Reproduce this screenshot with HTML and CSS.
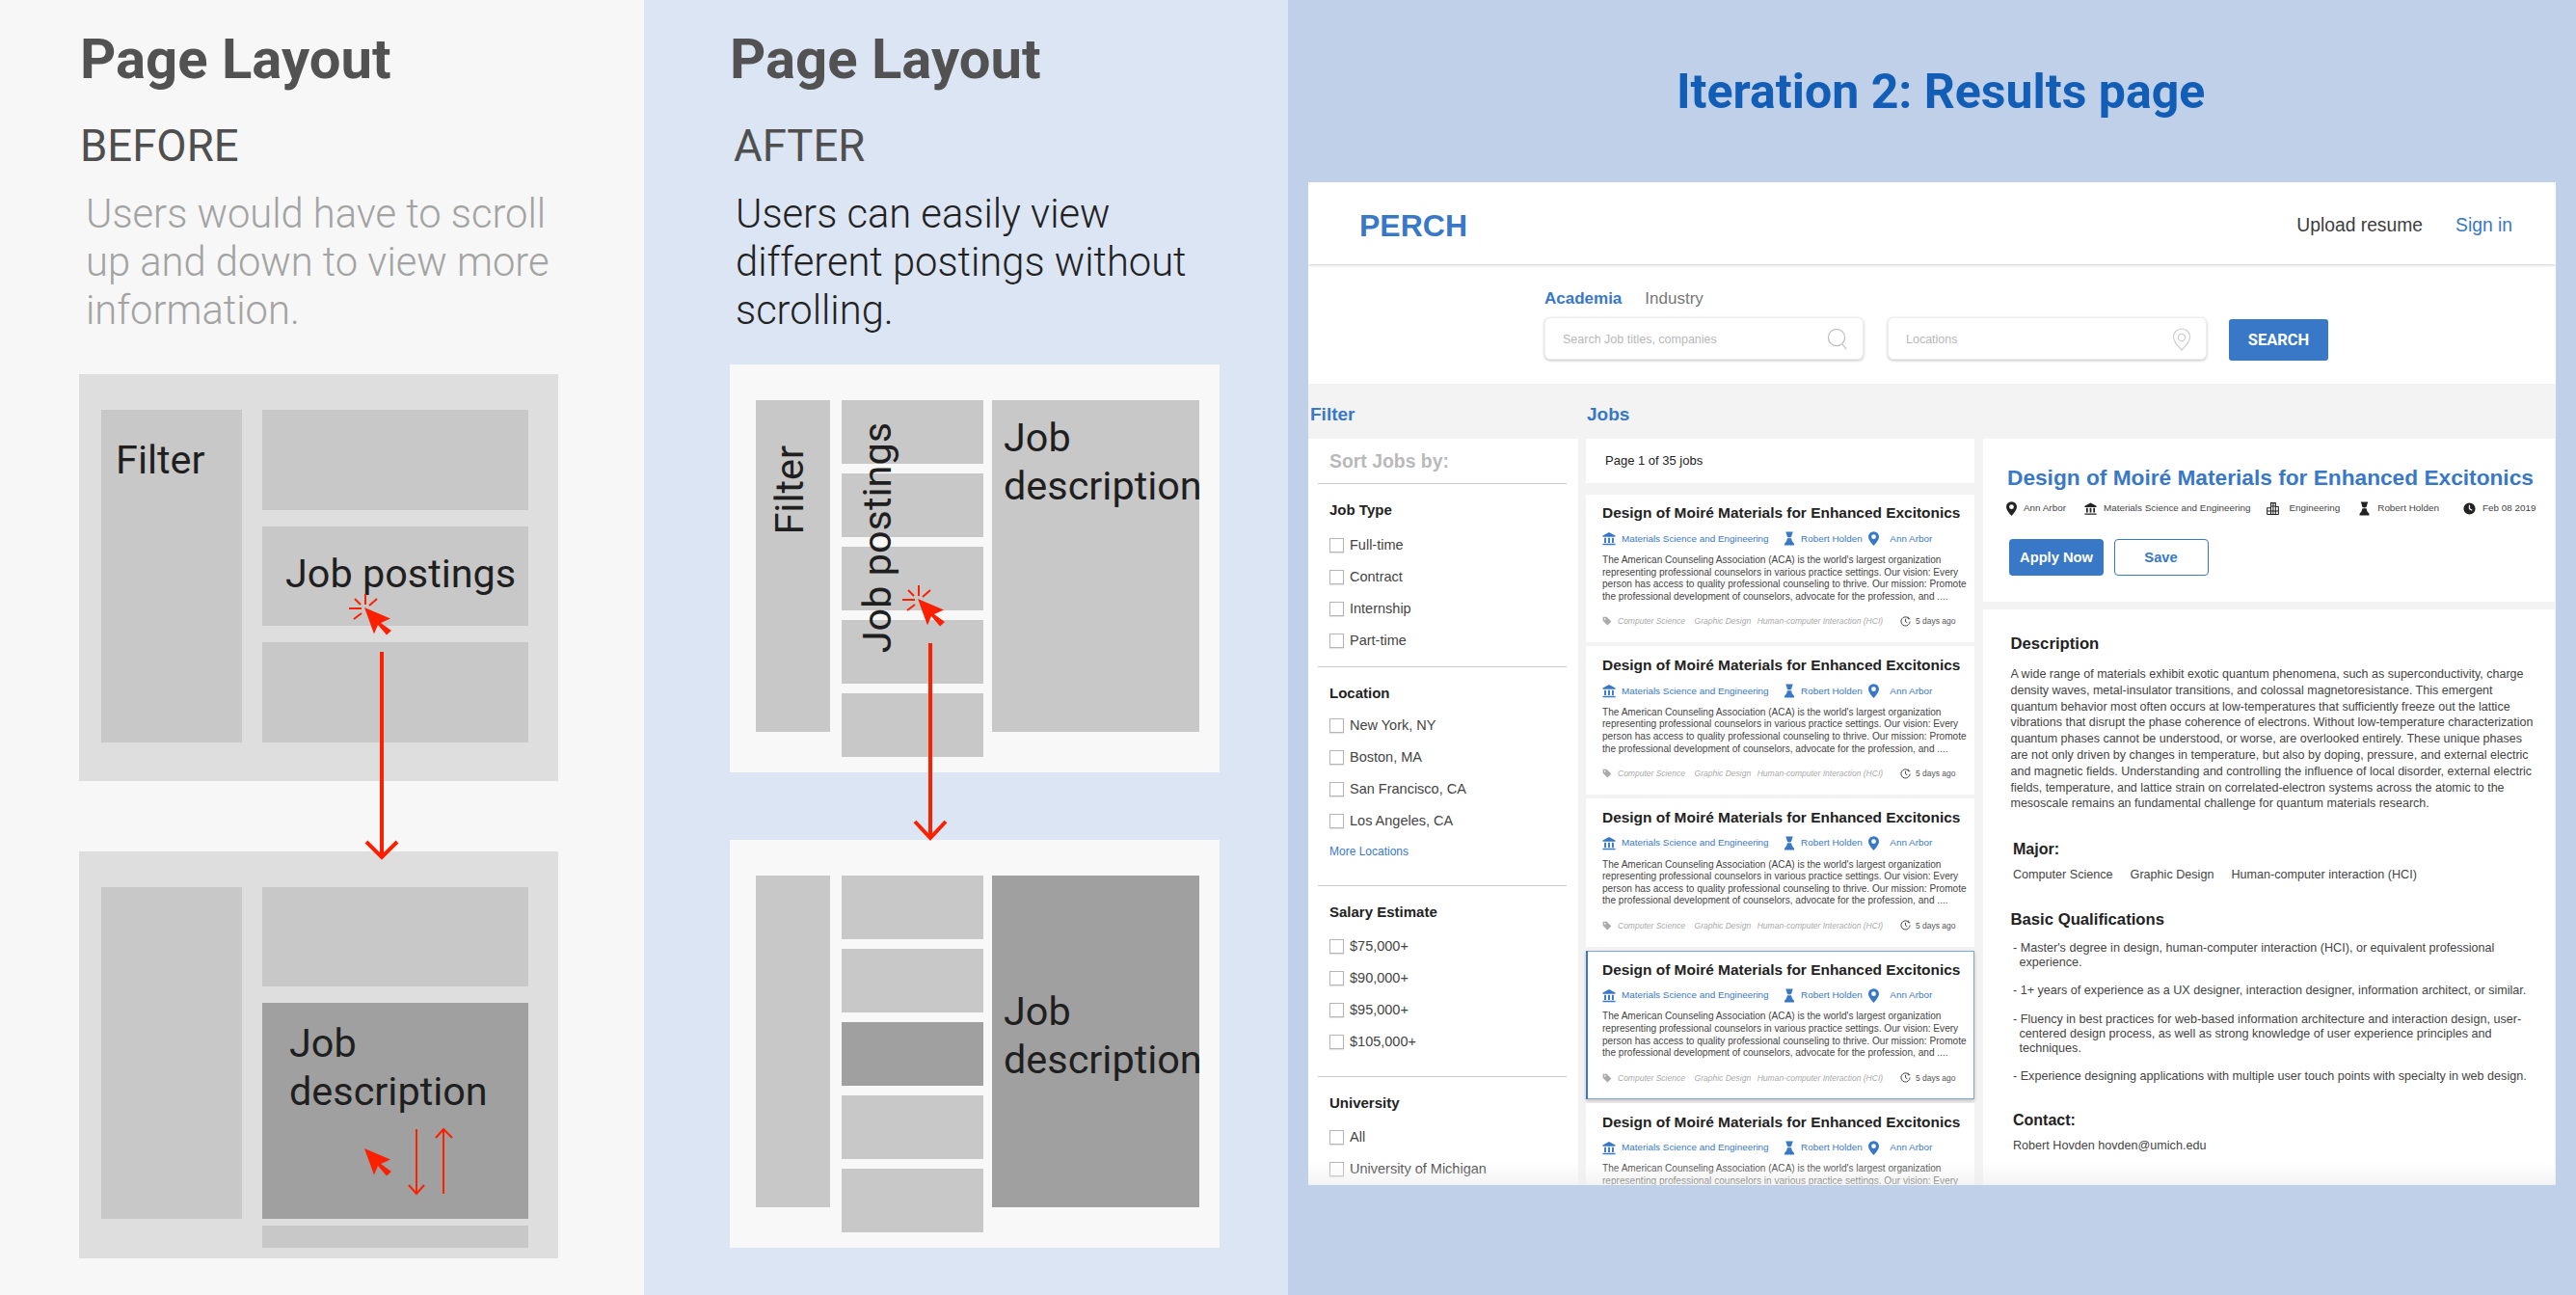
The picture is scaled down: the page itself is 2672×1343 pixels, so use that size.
FILE: index.html
```html
<!DOCTYPE html>
<html lang="en">
<head>
  <meta charset="UTF-8">
  <title>Page Layout - Iteration 2</title>
  <link rel="stylesheet" href="styles.css">
</head>
<body>

  <!-- shared icons -->
  <svg class="sprites" width="0" height="0">
    <defs>
      <symbol id="i-bank" viewBox="0 0 16 16"><path d="M8 .5 15.5 4.600V6H.5V4.600zM2.400 7h2.200v6H2.400zM6.900 7h2.200v6H6.900zM11.400 7h2.200v6h-2.200zM.5 14h15v1.600H.5z"/></symbol>
      <symbol id="i-person" viewBox="2 0 12 16"><path d="M4 .6h8l-1.200 3.500a2.800 2.800 0 0 1-5.600 0zM5.800 7.600h4.400l.9 3.200 2.200 2.800v1.900H2.700v-1.900l2.200-2.800z"/></symbol>
      <symbol id="i-pin" viewBox="2 0 12 16"><path fill-rule="evenodd" d="M8 0a6 6 0 0 0-6 6c0 4 6 10 6 10s6-6 6-10a6 6 0 0 0-6-6zm0 3.400a2.600 2.600 0 1 1 0 5.200 2.600 2.600 0 0 1 0-5.200z"/></symbol>
      <symbol id="i-clock" viewBox="0 0 16 16"><path fill-rule="evenodd" d="M8 .5a7.500 7.500 0 1 0 0 15 7.500 7.500 0 0 0 0-15zM7.200 3.500h1.500v4.200l3 1.800-.8 1.200-3.700-2.200z"/></symbol>
      <symbol id="i-clock-line" viewBox="0 0 16 16"><path d="M12.800 3.200A6.700 6.700 0 1 0 14.700 8M8 4v4.200l2.600 1.600M12 1v3h3" fill="none" stroke="#444" stroke-width="1.400"/></symbol>
      <symbol id="i-tag" viewBox="0 0 16 16"><path fill-rule="evenodd" d="M1 1h6.400L15 8.600 8.600 15 1 7.400zM4.400 3a1.400 1.400 0 1 0 0 2.800 1.400 1.400 0 0 0 0-2.800z"/></symbol>
      <symbol id="i-building" viewBox="0 0 16 16"><path d="M5.500 15.500V.8h6v14.700M11.500 5.500h3.700v10M5.500 7H.8v8.500M.8 11h14.400M5.500 5h6M8.500.8v14.700M.8 15.500h14.400" fill="none" stroke="#222" stroke-width="1.300"/></symbol>
      <g id="cursor">
        <path d="M0 0 27 11.500 17 16 28 24 23 28.500 14 18 10 27.500z" fill="#fb2000"/>
      </g>
      <g id="burst">
        <path d="M1-14V-3M13-9 5-2M-16 1H-3M-11 12-3 6M-10-9-4-3" fill="none" stroke="#fb2000" stroke-width="2"/>
      </g>
    </defs>
  </svg>

  <div class="page">

    <!-- BEFORE -->
    <section class="panel panel-before">
      <h1 class="panel-title">Page Layout</h1>
      <h2 class="panel-sub">BEFORE</h2>
      <p class="panel-text muted">Users would have to scroll<br>up and down to view more<br>information.</p>

      <div class="wire wire-old">
        <div class="block old-filter label-filter">Filter</div>
        <div class="old-stack">
          <div class="block"></div>
          <div class="block label-postings">Job postings</div>
          <div class="block"></div>
        </div>
      </div>

      <div class="wire wire-old wire-old-next">
        <div class="block old-filter short"></div>
        <div class="old-stack next">
          <div class="block h103"></div>
          <div class="block dark h224 label-desc">Job<br>description</div>
          <div class="block h23"></div>
        </div>
      </div>

      <svg class="overlay" width="668" height="1343">
        <use href="#burst" x="378" y="630"/>
        <use href="#cursor" x="378" y="630"/>
        <path class="arrow" d="M396 676V890M380 873 396 889 412 873"/>
        <use href="#cursor" x="378" y="1191"/>
        <path class="arrow thin" d="M432 1171V1238M424 1229 432 1238 440 1229M460 1238V1171M452 1180 460 1171 469 1180"/>
      </svg>
    </section>

    <!-- AFTER -->
    <section class="panel panel-after">
      <h1 class="panel-title">Page Layout</h1>
      <h2 class="panel-sub">AFTER</h2>
      <p class="panel-text">Users can easily view<br>different postings without<br>scrolling.</p>

      <div class="wire wire-new">
        <div class="block new-filter"><span class="vert">Filter</span></div>
        <div class="new-stack">
          <div class="block"></div>
          <div class="block"></div>
          <div class="block"></div>
          <div class="block"></div>
          <div class="block"></div>
        </div>
        <div class="block new-desc">Job<br>description</div>
        <span class="vert vert-postings">Job postings</span>
      </div>

      <div class="wire wire-new wire-new-next">
        <div class="block new-filter"></div>
        <div class="new-stack">
          <div class="block"></div>
          <div class="block"></div>
          <div class="block dark"></div>
          <div class="block"></div>
          <div class="block"></div>
        </div>
        <div class="block new-desc dark lower">Job<br>description</div>
      </div>

      <svg class="overlay" width="668" height="1343">
        <use href="#burst" x="284" y="621"/>
        <use href="#cursor" x="284" y="621"/>
        <path class="arrow" d="M297 667V870M281 852 297 869 313 852"/>
      </svg>
    </section>

    <!-- RESULTS PAGE -->
    <section class="panel panel-results">
      <h1 class="results-title">Iteration 2: Results page</h1>

      <div class="app">
        <header class="app-head">
          <div class="logo">PERCH</div>
          <nav class="app-nav">
            <a class="nav-upload">Upload resume</a>
            <a class="nav-sign">Sign in</a>
          </nav>
        </header>

        <div class="search-area">
          <div class="tabs">
            <span class="tab active">Academia</span>
            <span class="tab">Industry</span>
          </div>
          <div class="search-row">
            <div class="search-box">
              <span>Search Job titles, companies</span>
              <svg width="22" height="24" viewBox="0 0 22 24"><circle cx="10" cy="10" r="8.600" fill="none" stroke="#bbb" stroke-width="1.200"/><path d="M16 17l4 5" stroke="#bbb" stroke-width="1.200"/></svg>
            </div>
            <div class="search-box">
              <span>Locations</span>
              <svg width="20" height="24" viewBox="0 0 20 24"><path d="M10 1a8.600 8.600 0 0 0-8.600 8.600C1.400 14.600 10 23 10 23s8.600-8.400 8.600-13.400A8.600 8.600 0 0 0 10 1z" fill="none" stroke="#ccc" stroke-width="1.200"/><circle cx="10" cy="10" r="3.600" fill="none" stroke="#ccc" stroke-width="1.200"/></svg>
            </div>
            <button class="search-btn">SEARCH</button>
          </div>
        </div>

        <div class="results">
          <!-- filter column -->
          <div class="col">
            <h3 class="col-title">Filter</h3>
            <div class="filter-card">
              <div class="filter-group sort">Sort Jobs by:</div>

              <div class="filter-group g-type">
                <h4>Job Type</h4>
                <ul class="checks">
                  <li><span class="box"></span>Full-time</li>
                  <li><span class="box"></span>Contract</li>
                  <li><span class="box"></span>Internship</li>
                  <li><span class="box"></span>Part-time</li>
                </ul>
              </div>

              <div class="filter-group g-location">
                <h4>Location</h4>
                <ul class="checks">
                  <li><span class="box"></span>New York, NY</li>
                  <li><span class="box"></span>Boston, MA</li>
                  <li><span class="box"></span>San Francisco, CA</li>
                  <li><span class="box"></span>Los Angeles, CA</li>
                </ul>
                <a class="more">More Locations</a>
              </div>

              <div class="filter-group g-salary">
                <h4>Salary Estimate</h4>
                <ul class="checks">
                  <li><span class="box"></span>$75,000+</li>
                  <li><span class="box"></span>$90,000+</li>
                  <li><span class="box"></span>$95,000+</li>
                  <li><span class="box"></span>$105,000+</li>
                </ul>
              </div>

              <div class="filter-group g-uni">
                <h4>University</h4>
                <ul class="checks">
                  <li><span class="box"></span>All</li>
                  <li><span class="box"></span>University of Michigan</li>
                </ul>
              </div>
            </div>
          </div>

          <!-- jobs column -->
          <div class="col">
            <h3 class="col-title jobs-title">Jobs</h3>
            <div class="page-count">Page 1 of 35 jobs</div>
            <div class="job-list">

              <article class="job">
                <h4>Design of Moiré Materials for Enhanced Excitonics</h4>
                <div class="job-meta">
                  <span><svg class="ic-bank"><use href="#i-bank"/></svg>Materials Science and Engineering</span>
                  <span><svg class="ic-person"><use href="#i-person"/></svg>Robert Holden</span>
                  <span><svg class="ic-pin"><use href="#i-pin"/></svg>Ann Arbor</span>
                </div>
                <p>The American Counseling Association (ACA) is the world's largest organization<br>representing professional counselors in various practice settings. Our vision: Every<br>person has access to quality professional counseling to thrive. Our mission: Promote<br>the professional development of counselors, advocate for the profession, and ....</p>
                <div class="job-tags">
                  <svg class="ic-tag"><use href="#i-tag"/></svg>
                  <em>Computer Science</em><em>Graphic Design</em><em>Human-computer Interaction (HCI)</em>
                  <span class="ago"><svg><use href="#i-clock-line"/></svg>5 days ago</span>
                </div>
              </article>

              <article class="job">
                <h4>Design of Moiré Materials for Enhanced Excitonics</h4>
                <div class="job-meta">
                  <span><svg class="ic-bank"><use href="#i-bank"/></svg>Materials Science and Engineering</span>
                  <span><svg class="ic-person"><use href="#i-person"/></svg>Robert Holden</span>
                  <span><svg class="ic-pin"><use href="#i-pin"/></svg>Ann Arbor</span>
                </div>
                <p>The American Counseling Association (ACA) is the world's largest organization<br>representing professional counselors in various practice settings. Our vision: Every<br>person has access to quality professional counseling to thrive. Our mission: Promote<br>the professional development of counselors, advocate for the profession, and ....</p>
                <div class="job-tags">
                  <svg class="ic-tag"><use href="#i-tag"/></svg>
                  <em>Computer Science</em><em>Graphic Design</em><em>Human-computer Interaction (HCI)</em>
                  <span class="ago"><svg><use href="#i-clock-line"/></svg>5 days ago</span>
                </div>
              </article>

              <article class="job">
                <h4>Design of Moiré Materials for Enhanced Excitonics</h4>
                <div class="job-meta">
                  <span><svg class="ic-bank"><use href="#i-bank"/></svg>Materials Science and Engineering</span>
                  <span><svg class="ic-person"><use href="#i-person"/></svg>Robert Holden</span>
                  <span><svg class="ic-pin"><use href="#i-pin"/></svg>Ann Arbor</span>
                </div>
                <p>The American Counseling Association (ACA) is the world's largest organization<br>representing professional counselors in various practice settings. Our vision: Every<br>person has access to quality professional counseling to thrive. Our mission: Promote<br>the professional development of counselors, advocate for the profession, and ....</p>
                <div class="job-tags">
                  <svg class="ic-tag"><use href="#i-tag"/></svg>
                  <em>Computer Science</em><em>Graphic Design</em><em>Human-computer Interaction (HCI)</em>
                  <span class="ago"><svg><use href="#i-clock-line"/></svg>5 days ago</span>
                </div>
              </article>

              <article class="job selected">
                <h4>Design of Moiré Materials for Enhanced Excitonics</h4>
                <div class="job-meta">
                  <span><svg class="ic-bank"><use href="#i-bank"/></svg>Materials Science and Engineering</span>
                  <span><svg class="ic-person"><use href="#i-person"/></svg>Robert Holden</span>
                  <span><svg class="ic-pin"><use href="#i-pin"/></svg>Ann Arbor</span>
                </div>
                <p>The American Counseling Association (ACA) is the world's largest organization<br>representing professional counselors in various practice settings. Our vision: Every<br>person has access to quality professional counseling to thrive. Our mission: Promote<br>the professional development of counselors, advocate for the profession, and ....</p>
                <div class="job-tags">
                  <svg class="ic-tag"><use href="#i-tag"/></svg>
                  <em>Computer Science</em><em>Graphic Design</em><em>Human-computer Interaction (HCI)</em>
                  <span class="ago"><svg><use href="#i-clock-line"/></svg>5 days ago</span>
                </div>
              </article>

              <article class="job">
                <h4>Design of Moiré Materials for Enhanced Excitonics</h4>
                <div class="job-meta">
                  <span><svg class="ic-bank"><use href="#i-bank"/></svg>Materials Science and Engineering</span>
                  <span><svg class="ic-person"><use href="#i-person"/></svg>Robert Holden</span>
                  <span><svg class="ic-pin"><use href="#i-pin"/></svg>Ann Arbor</span>
                </div>
                <p class="job-cut">The American Counseling Association (ACA) is the world's largest organization<br>representing professional counselors in various practice settings. Our vision: Every</p>
              </article>

            </div>
          </div>

          <!-- detail column -->
          <div class="col detail-col">
            <div class="detail-top">
              <h2>Design of Moiré Materials for Enhanced Excitonics</h2>
              <div class="detail-meta">
                <span><svg><use href="#i-pin"/></svg>Ann Arbor</span>
                <span><svg><use href="#i-bank"/></svg>Materials Science and Engineering</span>
                <span><svg><use href="#i-building"/></svg>Engineering</span>
                <span><svg><use href="#i-person"/></svg>Robert Holden</span>
                <span><svg><use href="#i-clock"/></svg>Feb 08 2019</span>
              </div>
              <div class="detail-btns">
                <button class="btn-apply">Apply Now</button>
                <button class="btn-save">Save</button>
              </div>
            </div>
            <div class="detail-body">
              <h3>Description</h3>
              <p class="detail-para">A wide range of materials exhibit exotic quantum phenomena, such as superconductivity, charge<br>density waves, metal-insulator transitions, and colossal magnetoresistance. This emergent<br>quantum behavior most often occurs at low-temperatures that sufficiently freeze out the lattice<br>vibrations that disrupt the phase coherence of electrons. Without low-temperature characterization<br>quantum phases cannot be understood, or worse, are overlooked entirely. These unique phases<br>are not only driven by changes in temperature, but also by doping, pressure, and external electric<br>and magnetic fields. Understanding and controlling the influence of local disorder, external electric<br>fields, temperature, and lattice strain on correlated-electron systems across the atomic to the<br>mesoscale remains an fundamental challenge for quantum materials research.</p>

              <h3 class="in">Major:</h3>
              <div class="majors"><span>Computer Science</span><span>Graphic Design</span><span>Human-computer interaction (HCI)</span></div>

              <h3 class="quals">Basic Qualifications</h3>
              <ul class="qual-list">
                <li>- Master's degree in design, human-computer interaction (HCI), or equivalent professional<br>experience.</li>
                <li>- 1+ years of experience as a UX designer, interaction designer, information architect, or similar.</li>
                <li>- Fluency in best practices for web-based information architecture and interaction design, user-<br>centered design process, as well as strong knowledge of user experience principles and<br>techniques.</li>
                <li>- Experience designing applications with multiple user touch points with specialty in web design.</li>
              </ul>

              <h3 class="in">Contact:</h3>
              <div class="majors">Robert Hovden hovden@umich.edu</div>
            </div>
          </div>
        </div>
      </div>
    </section>
  </div>
</body>
</html>
```

FILE: styles.css
```css
* { box-sizing: border-box; margin: 0; padding: 0; }
html, body { width: 2672px; height: 1343px; overflow: hidden; }
body { background: #bfd0e8; font-family: "Liberation Sans", Arial, sans-serif; color: #222; }
ul { list-style: none; }
.sprites { position: absolute; }

.page { display: flex; width: 2672px; height: 1343px; }

/* --- wireframe panels --- */
.panel { position: relative; height: 1343px; font-family: Roboto, sans-serif; }
.panel-before { width: 668px; padding: 28px 0 0 82px; background: #f7f7f7; }
.panel-after { width: 668px; padding: 28px 0 0 89px; background: #dce5f3; }

.panel-title { font-size: 58px; line-height: 66px; font-weight: 700; color: #525252; }
.panel-sub { margin-top: 33px; font-size: 45.5px; line-height: 50px; font-weight: 400; color: #4f4f4f; }
.panel-text { margin: 20px 0 0 7px; font-size: 41.7px; line-height: 50px; font-weight: 300; color: #222; }
.panel-text.muted { color: #a3a3a3; }

.panel-before .panel-title, .panel-before .panel-sub { margin-left: 1px; }
.panel-after .panel-sub { margin-left: 4px; }
.panel-after .panel-text { margin-left: 6px; }

.wire { position: relative; display: flex; font-size: 41.4px; line-height: 50px; color: #1f1f1f; }
.block { background: #c8c8c8; }
.block.dark { background: #a0a0a0; }

.wire-old { width: 497px; height: 422px; margin-top: 41px; padding: 37px 0 0 23px; background: #dedede; gap: 21px; }
.wire-old-next { margin-top: 73px; }
.old-filter { width: 146px; height: 345px; }
.old-filter.short { height: 344px; }
.old-stack { width: 276px; height: 345px; display: flex; flex-direction: column; gap: 17px; }
.old-stack .block { height: 103.6px; }
.old-stack.next { height: 374px; gap: 0; }
.old-stack.next .h103 { height: 103px; }
.old-stack.next .h224 { height: 224px; margin-top: 17px; }
.old-stack.next .h23 { height: 23px; margin-top: 7px; }
.label-filter { padding: 27px 0 0 15px; }
.label-postings { padding: 24px 0 0 24px; }
.label-desc { padding: 17px 0 0 28px; }

.wire-new { width: 508px; height: 423px; margin-top: 31px; padding: 37px 0 0 27px; background: #f8f8f8; }
.wire-new-next { margin-top: 70px; }
.new-filter { width: 77px; height: 344px; padding: 47px 0 0 10px; }
.new-stack { width: 147px; margin: 0 9.5px 0 11.5px; display: flex; flex-direction: column; gap: 10.5px; }
.new-stack .block { height: 65.5px; }
.new-desc { width: 214.5px; height: 344px; padding: 14px 0 0 12px; white-space: nowrap; }
.new-desc.lower { padding-top: 116px; }

.vert { display: inline-block; writing-mode: vertical-rl; transform: rotate(180deg); white-space: nowrap; }
.vert-postings { position: absolute; left: 128px; top: 60px; }

.overlay { position: absolute; left: 0; top: 0; pointer-events: none; }
.arrow { fill: none; stroke: #fb2000; stroke-width: 4; }
.arrow.thin { stroke-width: 2; }

/* --- results page --- */
.panel-results { width: 1336px; padding: 66px 21px 0; background: #bfd0e8; font-family: "Liberation Sans", Arial, sans-serif; }
.results-title { font-family: Roboto, sans-serif; font-size: 50px; line-height: 58px; font-weight: 700; color: #125db5; padding-left: 382px; white-space: nowrap; }

.app { position: relative; width: 1294px; height: 1040px; margin-top: 65px; background: #f3f3f3; overflow: hidden; }
.app::after { content: ""; position: absolute; left: 0; right: 0; bottom: 0; height: 24px; background: linear-gradient(rgba(235,235,235,0), rgba(235,235,235,.6)); }

.app-head { position: relative; display: flex; justify-content: space-between; align-items: center; height: 85px; padding: 6px 45px 0 53px; background: #fff; box-shadow: 0 1px 3px rgba(0,0,0,.2); }
.logo { font-size: 32px; font-weight: 700; color: #3878c7; }
.app-nav { display: flex; gap: 34px; font-size: 19.3px; margin-top: -2px; }
.nav-upload { color: #3d3d3d; }
.nav-sign { color: #3878c7; }

.search-area { height: 124px; padding: 25.5px 0 0 245px; background: #fff; }
.tabs { display: flex; gap: 24px; font-size: 17px; line-height: 20px; color: #777; }
.tab.active { font-weight: 700; color: #3878c7; }
.search-row { display: flex; margin-top: 9.5px; }
.search-box { display: flex; justify-content: space-between; align-items: center; width: 331px; height: 44px; margin-right: 25px; padding: 2px 15px 0 18px; background: #fff; border: 1px solid #eee; border-radius: 6px; box-shadow: 0 1px 3px rgba(0,0,0,.25); font-size: 12.5px; color: #b8b8b8; }
.search-box + .search-box { margin-right: 23px; }
.search-btn { width: 103px; height: 43px; margin-top: 2px; border: none; border-radius: 3px; background: #3878c7; color: #fff; font-family: Roboto, sans-serif; font-size: 16.5px; font-weight: 700; }

.results { display: grid; grid-template-columns: 280px 403px 594px; column-gap: 8px; }
.results > .col:last-child { margin-left: 1px; }
.col-title { height: 57px; padding: 21px 0 0 2px; font-size: 19px; line-height: 22px; font-weight: 700; color: #3878c7; }
.jobs-title { padding-left: 1px; }

.filter-card { height: 780px; background: #fff; padding-top: 12px; }
.filter-group { margin: 0 12.5px 0 10px; padding: 18px 12px 0; border-bottom: 1px solid #ccc; }
.filter-group h4 { font-size: 15px; line-height: 18px; color: #222; }
.filter-group.sort { padding-top: 0; padding-bottom: 12px; font-size: 19.4px; line-height: 22px; font-weight: 700; color: #b9b9b9; }
.checks { display: flex; flex-direction: column; gap: 18px; font-size: 14.5px; line-height: 15px; color: #444; }
.checks li { display: flex; align-items: center; gap: 6px; height: 15px; white-space: nowrap; }
.box { width: 15px; height: 15px; border: 1px solid #b5b5b5; background: #fff; box-shadow: 0 1px 1px rgba(0,0,0,.1); }
.g-type { padding-bottom: 19px; }
.g-type .checks { margin-top: 20px; }
.g-location { padding-bottom: 28px; }
.g-location .checks { margin-top: 17px; }
.more { display: block; margin-top: 17px; font-size: 12px; line-height: 14px; color: #3878c7; }
.g-salary { padding-bottom: 28px; }
.g-salary .checks { margin-top: 19px; }
.g-uni { border-bottom: none; }
.g-uni .checks { margin-top: 19px; }

.page-count { height: 46px; padding: 15px 0 0 20px; background: #fff; font-size: 13px; line-height: 16px; color: #222; }
.job-list { display: flex; flex-direction: column; gap: 4.3px; margin-top: 11.7px; }
.job { height: 153.5px; padding: 9.8px 15px 0 17px; background: #fff; white-space: nowrap; }
.job.selected { box-shadow: inset 2px 0 0 #3878c7, inset 0 0 0 1px #7ba6dc, 0 2px 4px rgba(0,0,0,.2); }
.job h4 { font-size: 15.45px; line-height: 20px; color: #222; }
.job-meta { display: flex; align-items: center; margin-top: 8.9px; font-size: 9.9px; line-height: 14px; color: #3878c7; }
.job-meta span { display: flex; align-items: center; }
.job-meta span:nth-child(2) { margin-left: 15px; }
.job-meta span:nth-child(3) { margin-left: 6px; }
.job-meta svg { flex: none; fill: #3878c7; height: 15px; }
.ic-bank { width: 14px; margin-right: 6px; }
.ic-person { width: 12px; margin-right: 6.5px; }
.ic-pin { width: 11px; margin-right: 11.5px; }
.job p { margin-top: 8.6px; font-size: 10.1px; line-height: 12.6px; color: #444; }
.job-tags { display: flex; align-items: center; margin-top: 13px; font-size: 8.5px; line-height: 12px; color: #aaa; }
.job-tags em { margin-right: 9.7px; }
.job-tags em:nth-of-type(2) { margin-right: 6.5px; }
.job-tags em:last-of-type { margin-right: 0; }
.ic-tag { flex: none; width: 10px; height: 12px; margin-right: 6px; fill: #aaa; }
.ago { display: flex; align-items: center; margin-left: auto; margin-right: 4.5px; font-size: 8.5px; color: #555; }
.ago svg { flex: none; width: 11px; height: 11px; margin-right: 4.5px; }

.detail-col { display: flex; flex-direction: column; padding-top: 57px; gap: 8px; }
.detail-top { height: 169px; padding: 24.8px 0 0 25px; background: #fff; }
.detail-top h2 { font-size: 22.7px; line-height: 30px; font-weight: 700; color: #3878c7; white-space: nowrap; }
.detail-meta { display: flex; margin: 10.2px 0 0 -1px; font-size: 9.9px; line-height: 14px; color: #444; white-space: nowrap; }
.detail-meta span { display: flex; align-items: center; }
.detail-meta svg { flex: none; width: 13px; height: 15px; margin-right: 7px; fill: #222; }
.detail-meta span:nth-child(1) svg { width: 11px; }
.detail-meta span:nth-child(2) { margin-left: 19px; }
.detail-meta span:nth-child(3) { margin-left: 16px; }
.detail-meta span:nth-child(3) svg { margin-right: 11px; }
.detail-meta span:nth-child(4) { margin-left: 19px; }
.detail-meta span:nth-child(5) { margin-left: 25px; }
.detail-btns { display: flex; gap: 10.5px; margin: 24px 0 0 2px; }
.detail-btns button { width: 98px; height: 38px; border-radius: 4px; font-family: "Liberation Sans", Arial, sans-serif; font-size: 14.7px; font-weight: 700; }
.btn-apply { background: #3878c7; border: none; color: #fff; }
.btn-save { background: #fff; border: 1px solid #3878c7; color: #3878c7; }

.detail-body { flex: 1; padding: 26px 0 0 28.5px; background: #fff; white-space: nowrap; color: #444; }
.detail-body h3 { font-size: 16.7px; line-height: 20px; color: #222; }
.detail-para { margin-top: 13px; font-size: 12.5px; line-height: 16.8px; }
.detail-body h3.in { margin: 28.4px 0 0 2.5px; font-size: 16px; }
.detail-body h3.quals { margin-top: 29.6px; }
.majors { display: flex; gap: 18px; margin: 8px 0 0 2.5px; font-size: 12.6px; line-height: 16px; }
.qual-list { margin: 12px 0 0 2.5px; font-size: 12.6px; line-height: 15px; }
.qual-list li { padding-left: 6.5px; text-indent: -6.5px; margin-bottom: 14.3px; }
.qual-list li:last-child { margin-bottom: 0; }
```
